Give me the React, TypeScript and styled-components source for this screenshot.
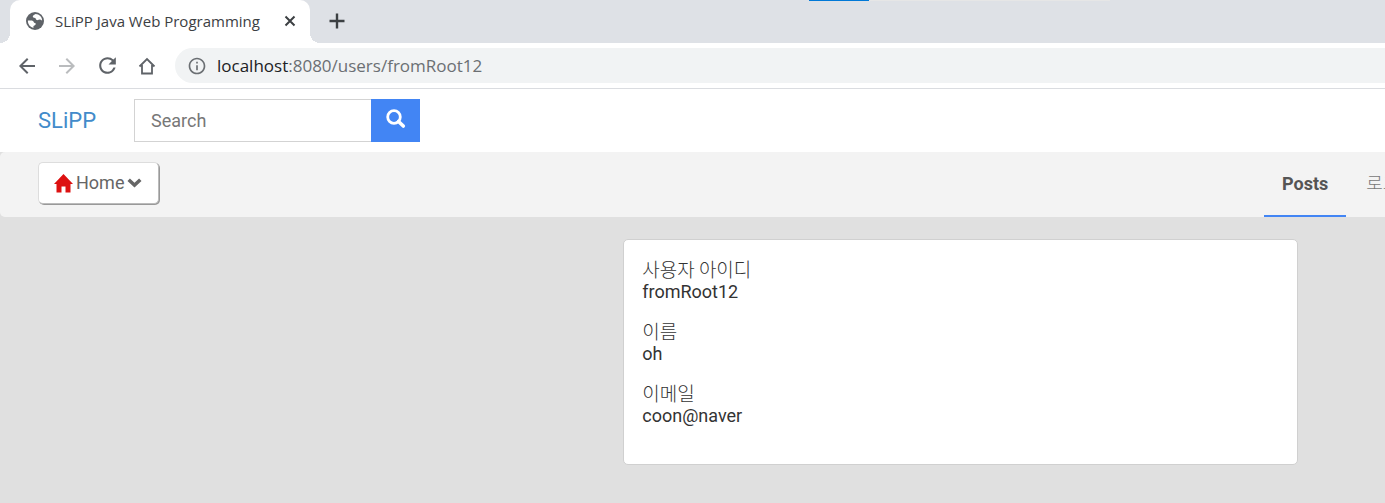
import React from "react";
import styled, { createGlobalStyle } from "styled-components";
import { MdArrowBack, MdArrowForward, MdInfoOutline, MdRefresh } from "react-icons/md";

const GlobalStyle = createGlobalStyle`
  *, *::before, *::after { box-sizing: border-box; }
  body {
    margin: 0;
    overflow-x: hidden;
    background: #e0e0e0;
    color: #333;
    font-family: Roboto, "Noto Sans CJK KR", sans-serif;
    font-size: 18px;
    line-height: 22px;
  }
  button, input { font: inherit; }
`;

const browserFont = `"Open Sans", "Noto Sans CJK KR", sans-serif`;

const TabStrip = styled.div`
  position: relative;
  display: flex;
  height: 43px;
  padding-left: 10px;
  background: #dee1e6;
`;

const LoadingTrack = styled.div`
  position: absolute;
  top: 0;
  left: 809px;
  width: 301px;
  height: 1px;
  background: linear-gradient(to right, #0078d7 60px, #e6e6e6 60px);
`;

const Tab = styled.div`
  position: relative;
  display: flex;
  align-items: center;
  width: 300px;
  padding: 0 12px 2px 16px;
  border-radius: 10px 10px 0 0;
  background: #fff;
  color: #3c4043;

  &::before, &::after {
    content: "";
    position: absolute;
    bottom: 0;
    width: 10px;
    height: 10px;
  }
  &::before {
    right: 100%;
    background: radial-gradient(circle at 0 0, transparent 10px, #fff 10px);
  }
  &::after {
    left: 100%;
    background: radial-gradient(circle at 100% 0, transparent 10px, #fff 10px);
  }
`;

const TabTitle = styled.span`
  flex: 1;
  margin-left: 11px;
  font-family: ${browserFont};
  font-size: 15px;
  white-space: nowrap;
`;

const IconButton = styled.button<{ $color?: string; $size?: number }>`
  display: flex;
  align-items: center;
  justify-content: center;
  flex: none;
  width: ${(p) => p.$size ?? 40}px;
  height: ${(p) => p.$size ?? 40}px;
  padding: 0;
  border: 0;
  background: none;
  color: ${(p) => p.$color ?? "#5f6368"};
`;

const NewTabButton = styled(IconButton)`
  margin: 5px 0 0 11px;
`;

const Toolbar = styled.div`
  display: flex;
  align-items: center;
  height: 46px;
  padding-left: 7px;
  border-bottom: 1px solid #dadce0;
  background: #fff;
`;

const AddressBar = styled.div`
  display: flex;
  flex: 1;
  align-items: center;
  height: 35px;
  margin-left: 8px;
  padding-left: 12px;
  border-radius: 18px 0 0 18px;
  background: #f1f3f4;
  color: #6b6f73;
  font-family: ${browserFont};
  font-size: 17px;
`;

const Url = styled.span`
  margin-left: 10px;
`;

const Host = styled.span`
  color: #202124;
`;

const Header = styled.header`
  display: flex;
  align-items: center;
  height: 63px;
  padding-left: 38px;
  background: #fff;
`;

const Brand = styled.a`
  color: #428bca;
  font-size: 22px;
  text-decoration: none;
`;

const SearchForm = styled.form`
  display: flex;
  height: 43px;
  margin-left: 38px;
`;

const SearchInput = styled.input`
  width: 237px;
  padding: 0 16px;
  border: 1px solid #d3d3d3;
  border-right: 0;
  border-radius: 0;
  background: #fff;
  color: #555;

  &::placeholder { color: #777; opacity: 1; }
`;

const SearchButton = styled.button`
  display: flex;
  align-items: center;
  justify-content: center;
  width: 49px;
  padding: 0 0 3px;
  border: 0;
  background: #4285f4;
  color: #fff;
`;

const SubNav = styled.nav`
  display: flex;
  justify-content: space-between;
  height: 65px;
  padding-left: 38px;
  overflow: hidden;
  border-radius: 5px 0 0 5px;
  background: #f3f3f3;
`;

const HomeButton = styled.button`
  display: flex;
  align-items: center;
  gap: 3px;
  height: 42px;
  margin-top: 10px;
  padding: 0 16px 0 15px;
  border: 1px solid #ddd;
  border-right-color: #bbb;
  border-bottom-color: #bbb;
  border-radius: 5px;
  background: #fff;
  box-shadow: 1px 1px 0 #999;
  color: #666;
`;

const Links = styled.div`
  display: flex;
  flex: none;
  margin-right: -51px;
`;

const NavLink = styled.a<{ $active?: boolean }>`
  display: flex;
  align-items: center;
  padding: 0 ${(p) => (p.$active ? 18 : 20)}px;
  border-bottom: 2px solid ${(p) => (p.$active ? "#4285f4" : "transparent")};
  color: ${(p) => (p.$active ? "#555" : "#777")};
  font-weight: ${(p) => (p.$active ? 700 : 300)};
  text-decoration: none;
  white-space: nowrap;
`;

const Main = styled.main`
  padding: 22px 24px 38px 45%;
`;

const Panel = styled.section`
  max-width: 675px;
  padding: 18px 18px 20px;
  border: 1px solid #d0d0d0;
  border-radius: 5px;
  background: #fff;
`;

const Profile = styled.dl`
  margin: 0;
`;

const Field = styled.div`
  margin-bottom: 16px;
`;

const Label = styled.dt`
  font-family: "Noto Sans CJK KR", sans-serif;
  font-size: 19px;
  font-weight: 300;
  line-height: 22px;
`;

const Value = styled.dd`
  margin: 0;
  line-height: 24px;
`;

const GlobeIcon = () => (
  <svg width="18" height="18" viewBox="0 0 18 18" aria-hidden="true">
    <circle cx="9" cy="9" r="9" fill="#5f6368" />
    <path
      d="M9.6 1.9c-.9.8-2.8 1-2.8 2.7 0 1 1.1 1.3 2.2 1.3 1 0 .7 1.7 1.7 2.1 1.2.5 2.2-.6 3.4-.4.9.1 1.5.7 2 1.1C16.300 4.800 13.200 2 9.600 1.900ZM1.900 8.500c1.700.1 3.700-.5 5 .4 1.100.7.7 2 2 2.100 1 .1 1 .7.7 1.500-.4 1-1.800.8-2.200 1.900-.2.600.1 1.200.3 1.500C4.300 15.300 1.700 12.300 1.900 8.500Z"
      fill="#fff"
    />
  </svg>
);

const CloseIcon = () => (
  <svg width="12" height="12" viewBox="0 0 12 12" aria-hidden="true">
    <path d="M1.500 1.500l9 9M10.500 1.500l-9 9" stroke="#3c4043" strokeWidth="2" />
  </svg>
);

const PlusIcon = () => (
  <svg width="16" height="16" viewBox="0 0 16 16" aria-hidden="true">
    <path d="M8 .5v15M.5 8h15" stroke="#3c4043" strokeWidth="2.400" />
  </svg>
);

const BrowserHomeIcon = () => (
  <svg width="18" height="18" viewBox="0 0 18 18" fill="none" aria-hidden="true">
    <path d="M1.500 9.500L9 2l7.500 7.500M4 8v8.500h10V8" stroke="currentColor" strokeWidth="1.800" />
  </svg>
);

const SearchIcon = () => (
  <svg width="20" height="20" viewBox="0 0 20 20" fill="none" stroke="currentColor" aria-hidden="true">
    <circle cx="8" cy="8" r="6.300" strokeWidth="2.800" />
    <path d="M12.500 12.500l4.800 4.500" strokeWidth="3.600" strokeLinecap="round" />
  </svg>
);

const HouseIcon = () => (
  <svg width="19" height="19" viewBox="0 0 19 19" aria-hidden="true">
    <path d="M9.500 0L19 10h-2.500v8.500h-5v-6h-4v6h-5V10H0Z" fill="#dd1111" />
  </svg>
);

const ChevronIcon = () => (
  <svg width="15" height="10" viewBox="0 0 14 10" aria-hidden="true">
    <path d="M2.400.4L7 4.700 11.600.4 14 3 7 9.600 0 3Z" fill="#666" />
  </svg>
);

const fields = [
  { label: "사용자 아이디", value: "fromRoot12" },
  { label: "이름", value: "oh" },
  { label: "이메일", value: "coon@naver" },
];

export default function App() {
  return (
    <>
      <GlobalStyle />
      <TabStrip>
        <LoadingTrack />
        <Tab>
          <GlobeIcon />
          <TabTitle>SLiPP Java Web Programming</TabTitle>
          <IconButton $size={16} aria-label="Close tab"><CloseIcon /></IconButton>
        </Tab>
        <NewTabButton $size={32} aria-label="New tab"><PlusIcon /></NewTabButton>
      </TabStrip>
      <Toolbar>
        <IconButton aria-label="Back"><MdArrowBack size={24} /></IconButton>
        <IconButton aria-label="Forward" $color="#babcbe"><MdArrowForward size={24} /></IconButton>
        <IconButton aria-label="Reload"><MdRefresh size={25} /></IconButton>
        <IconButton aria-label="Home page"><BrowserHomeIcon /></IconButton>
        <AddressBar>
          <MdInfoOutline size={20} />
          <Url><Host>localhost</Host>:8080/users/fromRoot12</Url>
        </AddressBar>
      </Toolbar>
      <Header>
        <Brand href="#">SLiPP</Brand>
        <SearchForm role="search" onSubmit={(e) => e.preventDefault()}>
          <SearchInput type="text" placeholder="Search" aria-label="Search" />
          <SearchButton type="submit" aria-label="Submit search"><SearchIcon /></SearchButton>
        </SearchForm>
      </Header>
      <SubNav>
        <HomeButton type="button"><HouseIcon />Home<ChevronIcon /></HomeButton>
        <Links>
          <NavLink href="#posts" $active>Posts</NavLink>
          <NavLink href="#login">로그인</NavLink>
        </Links>
      </SubNav>
      <Main>
        <Panel>
          <Profile>
            {fields.map((f) => (
              <Field key={f.label}>
                <Label>{f.label}</Label>
                <Value>{f.value}</Value>
              </Field>
            ))}
          </Profile>
        </Panel>
      </Main>
    </>
  );
}
